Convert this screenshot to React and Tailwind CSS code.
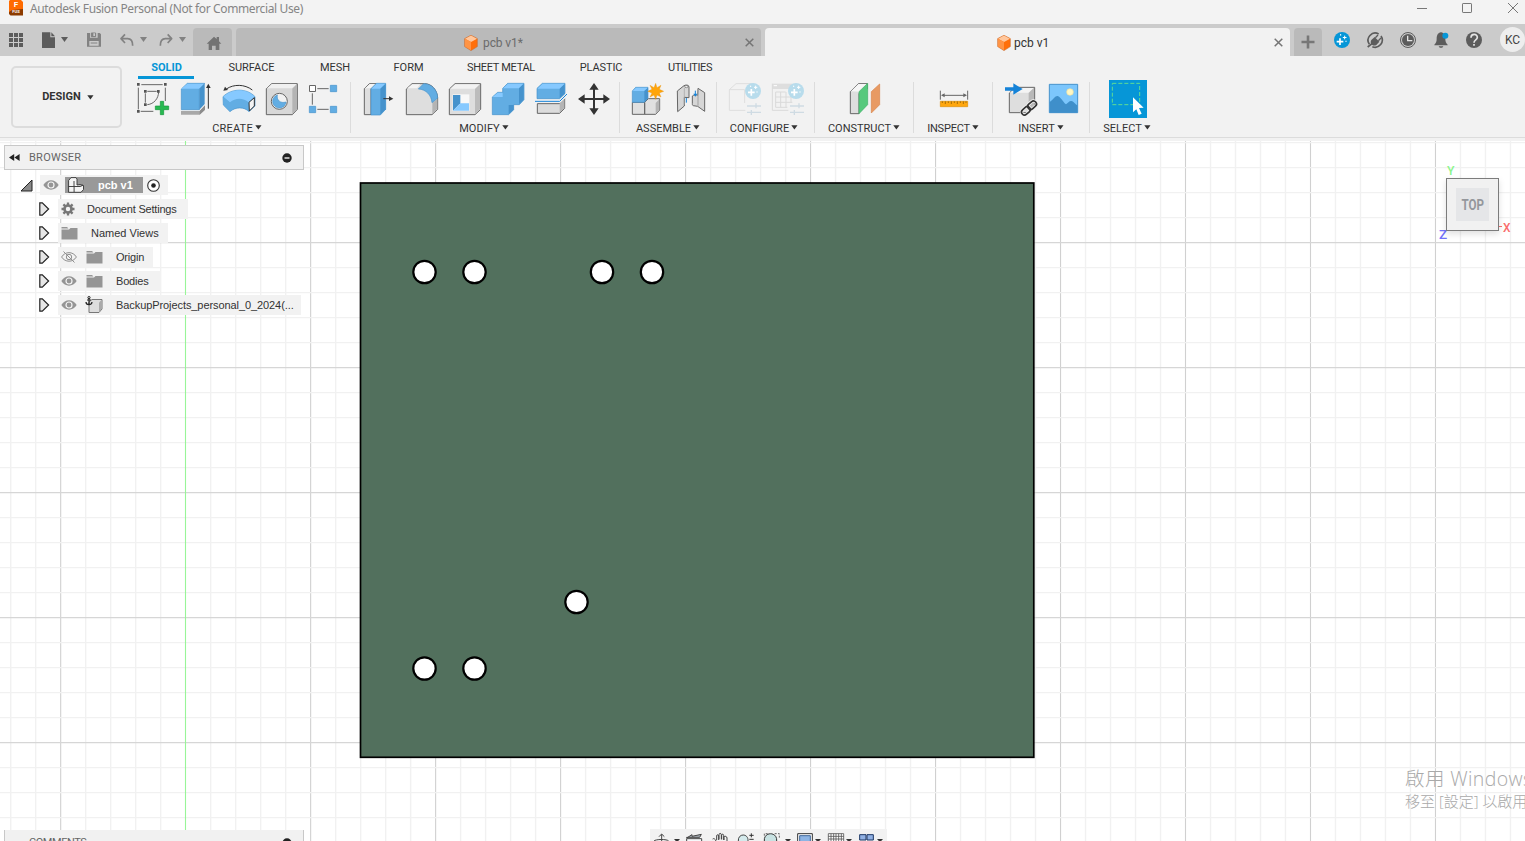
import React from "react";

/* Icons are drawn on a fine grid with three units to the pixel. */
function Ico({ x, y = 69, w = 129, h = 120, children }) {
  return (
    <svg width={w / 3} height={h / 3} viewBox={`${x} ${y} ${w} ${h}`} className="block shrink-0" fill="none" strokeLinejoin="round">
      {children}
    </svg>
  );
}

const G = "#666666";
const B = "#62ade3";
const BL = "#86c9ff";
const BD = "#4592cc";

function Caret({ className = "" }) {
  return (
    <svg width="7" height="5" viewBox="0 0 7 5" className={"shrink-0 " + className}>
      <path d="M0.300 0.3h6.200L3.400 4.600z" fill="currentColor" />
    </svg>
  );
}

function Cube() {
  return (
    <svg width="14" height="16" viewBox="0 0 14 16" className="relative top-px shrink-0">
      <path d="M7 .3 13.3 3.6v8L7 15.6.7 11.6v-8z" fill="#ff6f0a" stroke="#c96a2b" strokeWidth=".6" />
      <path d="M1 3.7 7 .5l6 3.2-6 3.4z" fill="#ffc79d" />
      <path d="M1 3.8 7 7.1v8.2l-6-3.8z" fill="#ff9445" />
    </svg>
  );
}

const createIcons = (
  <>
    <Ico x={33}>
      <path d="M55 95v65M64 86h64M136 95v40M62 166h38" stroke={G} strokeWidth="3" />
      <path d="M76 112v28M82 106h28M116 108c-1 20-14 36-34 38" stroke={G} strokeWidth="3" />
      <path d="M51 81h8v8h-8zM132 81h8v8h-8zM51 162h8v8h-8zM72 102h8v8h-8zM111 102h8v8h-8zM72 142h8v8h-8z" fill="#555" />
      <path d="M121 136h10v14h15v11h-15v15h-10v-15h-15v-11h15z" fill="#27b950" stroke="#14953a" strokeWidth="2" />
    </Ico>
    <Ico x={162}>
      <path d="M183 165h56l16-14v10l-16 15h-56z" fill="#a9a9a9" />
      <path d="M239 165l16-17v13l-16 15z" fill="#8c8c8c" />
      <path d="M184 99l18-17h52l-16 17v62h-54z" fill={B} stroke={BD} strokeWidth="2" />
      <path d="M184 98l18-15h52l-16 15z" fill={BL} />
      <path d="M238 98l16-16v62l-16 17z" fill={BD} />
      <path d="M265 158V92" stroke="#333" strokeWidth="3" />
      <path d="M265 83l7 13h-14z" fill="#333" />
    </Ico>
    <Ico x={291}>
      <path d="M309 122c26-26 72-26 96 0v28l-18 17c-14-15-41-15-57 0l-20-20z" fill={B} stroke={BD} strokeWidth="2" />
      <path d="M310 122c26-26 70-26 94 0l-18 17c-16-14-40-14-56 0z" fill={BL} />
      <path d="M310 124l20 16v26l-19-19z" fill={B} />
      <path d="M387 139l16-14v25l-15 15z" fill="#f4f4f4" stroke="#333" strokeWidth="3" />
      <path d="M319 99c22-15 55-15 78 3" stroke="#333" strokeWidth="3" />
      <path d="M310 104l5-12 9 10z" fill="#333" />
    </Ico>
    <Ico x={420}>
      <path d="M439 98l16-15h77v77l-15 16h-78z" fill="#d8d8d8" stroke={G} strokeWidth="3" />
      <path d="M441 97l15-13h74l-14 13z" fill="#f0f0f0" />
      <path d="M517 98l14-14v75l-14 15z" fill="#b4b4b4" />
      <circle cx="478" cy="136" r="24" fill="#f2f2f2" stroke={G} strokeWidth="3" />
      <path d="M472 117c-3 16 10 26 26 21a20 20 0 1 1-26-21z" fill={B} stroke={BD} strokeWidth="2" />
    </Ico>
    <Ico x={549}>
      <path d="M592 98h34M577 112v34M592 160h34" stroke={G} strokeWidth="3" />
      <path d="M568.500 88.500h18v18h-18z" fill="#fff" stroke={G} strokeWidth="3" />
      <path d="M631 88h19v19h-19zM568 151h19v19h-19zM631 151h19v19h-19z" fill={B} stroke={BD} strokeWidth="2" />
    </Ico>
  </>
);

const modifyIcons = (
  <>
    <Ico x={21}>
      <path d="M43 98l15-15h21L63 98v78H43z" fill="#dedede" stroke={G} strokeWidth="3" />
      <path d="M45 97l14-13h18L63 97z" fill="#f4f4f4" />
      <path d="M63 98l16-16h28v78l-16 17H63z" fill={B} stroke={BD} strokeWidth="2" />
      <path d="M64 98l15-15h27L91 98z" fill={BL} />
      <path d="M91 98l16-15v77l-16 16z" fill={BD} />
      <path d="M100 128h20" stroke="#333" strokeWidth="3" />
      <path d="M130 128l-13-7v14z" fill="#333" />
    </Ico>
    <Ico x={150}>
      <path d="M169 99l17-16h38c22 0 38 20 39 43v34l-17 16h-77z" fill="#dedede" stroke={G} strokeWidth="3" />
      <path d="M172 97l15-12h24l-10 12z" fill="#f4f4f4" />
      <path d="M247 140l15-12v30l-15 16z" fill="#b4b4b4" />
      <path d="M205 99l16-16c24 0 42 20 42 43l-17 14c-2-23-18-40-41-41z" fill={B} stroke={BD} strokeWidth="2" />
    </Ico>
    <Ico x={279}>
      <path d="M298 99l17-16h77v77l-17 16h-77z" fill="#dedede" stroke={G} strokeWidth="3" />
      <path d="M301 98l15-13h73l-14 13z" fill="#f2f2f2" />
      <path d="M375 99l15-14v74l-15 15z" fill="#bcbcbc" />
      <path d="M308 115h50v50h-50z" fill="#f8f8f8" />
      <path d="M309 117h22v25l-22 22z" fill={BD} />
      <path d="M331 142h26v22h-48z" fill={BL} />
    </Ico>
    <Ico x={408}>
      <path d="M427 123l16-14h15V97l15-15h49v49l-14 15h-17v15l-15 15h-49z" fill={B} stroke={BD} strokeWidth="2" />
      <path d="M459 97l15-14h47l-14 14zM428 123l15-13h15v13z" fill={BL} />
      <path d="M507 97l14-14v48l-14 14zM476 161v-14h15v14l-15 14z" fill={BD} />
    </Ico>
    <Ico x={537}>
      <path d="M562 143h67l15-15v29l-15 15h-67z" fill="#dcdcdc" stroke={G} strokeWidth="3" />
      <path d="M629 143l14-14v27l-14 14z" fill="#b4b4b4" />
      <path d="M561 97l16-15h68v31l-16 15h-68z" fill={B} stroke={BD} strokeWidth="2" />
      <path d="M562 98l16-15h66l-15 15z" fill={BL} />
      <path d="M629 98l15-14v29l-15 14z" fill={BD} />
      <path d="M554 136h76l22-22" stroke="#f2f2f2" strokeWidth="8" />
      <path d="M555 136h74l22-22" stroke="#1583d8" strokeWidth="3" />
    </Ico>
    <Ico x={666}>
      <path d="M732 95v68M698 129h68" stroke="#333" strokeWidth="6" />
      <path d="M732 81l14 20h-28zM732 177l14-20h-28zM684 129l20-14v28zM780 129l-20-14v28z" fill="#333" />
    </Ico>
  </>
);

const spark = (cx, cy) => (
  <>
    <circle cx={cx} cy={cy} r="24" fill="#b8dcec" />
    <path d={`M${cx - 5} ${cy - 6}v20M${cx - 15} ${cy + 4}h20`} stroke="#fff" strokeWidth="5" />
    <path d={`M${cx + 8} ${cy - 16}v10M${cx + 3} ${cy - 11}h10M${cx - 7} ${cy - 16}v4M${cx + 12} ${cy + 1}v4`} stroke="#fff" strokeWidth="3" />
  </>
);
const sliders = (x) => (
  <path d={`M${x} 150h42M${x} 169h42M${x + 27} 142v15M${x + 13} 162v15`} stroke="#cfdbe3" strokeWidth="4" />
);

const assembleIcons = (
  <>
    <Ico x={33}>
      <path d="M52 139h37v36H52zM89 139l11-11h34v34l-12 13H89z" fill="#e0e0e0" stroke={G} strokeWidth="3" />
      <path d="M122 141l11-11v31l-11 12z" fill="#b4b4b4" />
      <path d="M52 105l10-11h37v32l-11 13H52z" fill={B} stroke={BD} strokeWidth="2" />
      <path d="M53 105l10-10h36l-11 10z" fill={BL} />
      <path d="M88 105l11-10v32l-11 11z" fill={BD} />
      <path d="M122 82l4 13 12-7-5 12 13 6-13 5 5 12-12-6-4 13-5-13-12 6 6-12-13-5 13-6-6-12 12 7z" fill="#ffa50a" stroke="#e48a00" strokeWidth="1" />
    </Ico>
    <Ico x={162}>
      <path d="M187 105l20-16c5-3 15-3 15 4v32l-14-1v26l-20 17z" fill="#d6d6d6" stroke={G} strokeWidth="3" />
      <path d="M208 96v50" stroke="#a0a0a0" strokeWidth="2" />
      <ellipse cx="214" cy="92" rx="5" ry="3" fill="#fff" stroke={G} strokeWidth="2" />
      <path d="M249 97l20 13v56l-21-15-13-2c-3-1-3-3-3-6v-23c5-4 12-4 16-2z" fill="#d6d6d6" stroke={G} strokeWidth="3" />
      <path d="M249 99v50" stroke="#a0a0a0" strokeWidth="3" />
      <path d="M214 126v14M241 104v13" stroke="#1583d8" strokeWidth="3" />
      <path d="M235 113h12l-6 9z" fill="#1583d8" />
    </Ico>
  </>
);

const configureIcons = (
  <>
    <Ico x={324}>
      <path d="M343 101l20-18h48M343 101v62h48M343 101h46v40" stroke="#dedede" strokeWidth="3" />
      {spark(414, 105)}
      {sliders(396)}
    </Ico>
    <Ico x={453}>
      <path d="M472 83h60v16h-60z" fill="#dedede" />
      <path d="M472 83v80h48M482 108v46h35M482 123h60M482 139h50M497 108v46M513 108v46M482 108h30M528 120v20" stroke="#dadada" strokeWidth="3" />
      <path d="M476 89h10" stroke="#fff" strokeWidth="3" />
      {spark(543, 105)}
      {sliders(525)}
    </Ico>
  </>
);

const constructIcons = (
  <Ico x={687}>
    <path d="M706 107l24-24h27v16l-25 13v61h-26z" fill="#dedede" stroke={G} strokeWidth="3" />
    <path d="M708 106l22-22h26l-23 23z" fill="#f6f6f6" />
    <path d="M732 107l26-25v64l-26 27z" fill="#57c97d" stroke="#3fb067" strokeWidth="2" />
    <path d="M769 107l25-23v62l-25 25z" fill="#e89a63" stroke="#da8448" strokeWidth="2" />
  </Ico>
);

const inspectIcons = (
  <Ico x={96}>
    <path d="M121 104v27M203 104v27M128 118h68" stroke={G} strokeWidth="3" />
    <path d="M123 118l11-6v12zM201 118l-11-6v12z" fill={G} />
    <path d="M121 136h82v16h-82z" fill="#ffa70f" stroke="#dd8d00" strokeWidth="2" />
    <path d="M127 136v5M136 136v8M145 136v5M154 136v8M163 136v5M172 136v8M181 136v5M190 136v8M198 136v5" stroke="#7a5200" strokeWidth="2" />
  </Ico>
);

const insertIcons = (
  <>
    <Ico x={297}>
      <path d="M328 111l18-17h58v58l-18 18h-58z" fill="#dedede" stroke={G} strokeWidth="3" />
      <path d="M330 110l17-14h54l-15 14z" fill="#f4f4f4" />
      <path d="M386 111l16-16v56l-16 17z" fill="#b8b8b8" />
      <path d="M315 94h25V82l28 17-28 17v-12h-25z" fill="#1583d8" />
      <g transform="rotate(-42 387 156)" strokeWidth="10" stroke="#f2f2f2">
        <rect x="360" y="147" width="29" height="18" rx="9" />
        <rect x="385" y="147" width="29" height="18" rx="9" />
      </g>
      <g transform="rotate(-42 387 156)" strokeWidth="5" stroke="#333">
        <rect x="360" y="147" width="29" height="18" rx="9" />
        <rect x="385" y="147" width="29" height="18" rx="9" />
      </g>
    </Ico>
    <Ico x={426}>
      <path d="M448 85h85v85h-85z" fill="#7cc6fc" stroke={BD} strokeWidth="3" />
      <path d="M449 138c12-8 16-19 24-18 9 2 14 16 25 25 6-4 10-11 16-10 8 1 11 10 18 13v22h-83z" fill="#3f8fca" />
      <circle cx="510" cy="108" r="10" fill="#fff7c4" stroke="#f0e09a" strokeWidth="2" />
    </Ico>
  </>
);

const selectIcons = (
  <Ico x={618}>
    <path d="M627 72h114v114H627z" fill="#0696d7" />
    <path d="M637 82h82v64h-82z" stroke="#5fdc94" strokeWidth="3" strokeDasharray="12 6" />
    <path d="M699 124l32 31-14 1 8 17-9 4-7-17-10 9z" fill="#fff" />
  </Ico>
);

function Group({ label, children, className, iconPad, labelPad = "", last }) {
  return (
    <div className={"flex shrink-0 " + className}>
      <div className="flex min-w-0 flex-1 flex-col">
        <div className={"flex h-10 " + iconPad}>{children}</div>
        <div className={"flex h-[20px] items-center justify-center gap-[2px] whitespace-nowrap text-[11px] text-[#333] " + labelPad}>
          <span>{label}</span>
          <Caret className="mb-[3px]" />
        </div>
      </div>
      {!last && <div className="mt-[3px] h-[51px] w-px bg-[#dcdcdc]" />}
    </div>
  );
}

function Eye({ off }) {
  return (
    <svg width="16" height="12" viewBox="0 0 16 12" fill="none" className="shrink-0">
      {off ? (
        <>
          <path d="M.6 6C4 .2 12 .2 15.400 6 12 11.600 4 11.600.6 6z" stroke="#8f8f8f" />
          <circle cx="8" cy="6" r="2.700" stroke="#8f8f8f" />
          <path d="M2.500.5l11 11" stroke="#8f8f8f" />
        </>
      ) : (
        <>
          <path d="M.3 6C4-.4 12-.4 15.700 6 12 12.200 4 12.200.3 6z" fill="#959595" />
          <circle cx="8" cy="6" r="3" stroke="#f4f4f4" strokeWidth="1.200" />
        </>
      )}
    </svg>
  );
}

function Folder() {
  return (
    <svg width="17" height="14" viewBox="0 0 17 14" className="shrink-0">
      <path d="M.5 1h5.500l1.500 1.500H.5zM.5 3.500H8L9.500 2H16.500v11.500H.5z" fill="#959595" />
    </svg>
  );
}

function Gear() {
  return (
    <svg width="14" height="14" viewBox="-7 -7 14 14" className="shrink-0" fill="none">
      <path d="M0-6.500v13M-6.500 0h13M-4.600-4.600l9.200 9.200M-4.600 4.600l9.200-9.200" stroke="#777" strokeWidth="2.300" />
      <circle r="3.500" fill="#f2f2f2" stroke="#777" strokeWidth="2.600" />
    </svg>
  );
}

function Expander() {
  return (
    <svg width="11" height="14" viewBox="0 0 11 14" className="shrink-0">
      <path d="M.8.8h2.500L9.600 7l-6.300 6.200H.8z" fill="#e6e6e6" stroke="#222" strokeWidth="1.200" />
    </svg>
  );
}

function Row({ children, className }) {
  return (
    <div className="flex h-6 items-center pl-[35px]">
      <Expander />
      <div className={"ml-2 flex h-5 items-center whitespace-nowrap bg-[#f2f2f2] " + className}>{children}</div>
    </div>
  );
}

function MinusDot() {
  return (
    <svg width="10" height="10" viewBox="0 0 10 10" className="block shrink-0">
      <circle cx="5" cy="5" r="4.700" fill="#222" />
      <path d="M2.500 5h5" stroke="#fff" strokeWidth="1.300" />
    </svg>
  );
}

function Viewport() {
  const xs = Array.from({ length: 61 }, (_, i) => 10.7 + i * 24.996);
  const ys = Array.from({ length: 28 }, (_, i) => 142.6 + i * 25);
  const holes = [[424.500, 272], [474.500, 272], [602, 272], [652, 272], [576.500, 602], [424.500, 668.500], [474.500, 668.500]];
  return (
    <svg width="1525" height="703" viewBox="0 138 1525 703" className="block">
      <rect y="138" width="1525" height="703" fill="#fff" />
      <rect y="138" width="1525" height="3" fill="#f2f2f2" />
      {xs.map((x, i) =>
        i === 7 ? null : (
          <path key={"x" + i} d={`M${x} 141V841`} stroke={i % 5 === 2 ? "#d0d0d0" : "#f1f1f1"} strokeWidth={i % 5 === 2 ? 1.1 : 1.4} />
        )
      )}
      {ys.map((y, i) => (
        <path key={"y" + i} d={`M0 ${y}H1525`} stroke={i % 5 === 4 ? "#d6d6d6" : "#f1f1f1"} strokeWidth={i % 5 === 4 ? 1.2 : 1.4} />
      ))}
      <path d="M185.500 141V841" stroke="#98f598" strokeWidth="1.100" />
      <rect x="360.500" y="183" width="673.300" height="574.300" fill="#52705d" stroke="#000" strokeWidth="1.700" />
      {holes.map(([x, y]) => (
        <circle key={x + "-" + y} cx={x} cy={y} r="11.200" fill="#fff" stroke="#000" strokeWidth="2.200" />
      ))}
    </svg>
  );
}

const tabs = [
  ["SURFACE", "w-[101px]"],
  ["MESH", "w-[66px]"],
  ["FORM", "w-[81px]"],
  ["SHEET METAL", "w-[104px] tracking-[-0.3px]"],
  ["PLASTIC", "w-[96px] tracking-[-0.1px]"],
  ["UTILITIES", "w-[82px] tracking-[-0.4px]"],
];

export default function App() {
  return (
    <div className="relative flex h-[841px] w-[1525px] flex-col overflow-hidden bg-[#f2f2f2] font-['Roboto',sans-serif]">
      <header className="flex h-6 shrink-0 items-start bg-[#f3f3f3]">
        <svg width="16" height="17" viewBox="0 0 16 17" className="ml-2">
          <path d="M2 0h11l2 2v11H1V1z" fill="#ff6b00" />
          <path d="M1 12l3-2 11-1v6.500H2.500L1 14z" fill="#8c3b00" />
        </svg>
        <div className="-ml-[15px] w-[14px] text-center text-[8px] font-bold leading-[10px] text-white">
          F<div className="-mt-px text-[4px] leading-[6px]">FUS</div>
        </div>
        <div className="ml-[7px] whitespace-nowrap font-['Noto_Sans',sans-serif] text-[12px] leading-[18px] tracking-[-0.37px] text-[#858585]">
          Autodesk Fusion Personal (Not for Commercial Use)
        </div>
        <svg width="110" height="18" viewBox="0 0 110 18" className="ml-auto" fill="none" stroke="#777">
          <path d="M2 8.500h10M93 3l10 10M103 3L93 13" />
          <rect x="47.500" y="3.500" width="9" height="9" rx=".6" />
        </svg>
      </header>

      <div className="flex h-8 shrink-0 items-end bg-[#cbcbcb]">
        <Ico x={0} y={72} w={96} h={96}>
          <path d="M27 99h12v12H27zM42 99h12v12H42zM57 99h12v12H57zM27 114h12v12H27zM42 114h12v12H42zM57 114h12v12H57zM27 129h12v12H27zM42 129h12v12H42zM57 129h12v12H57z" fill="#5c5c5c" />
        </Ico>
        <Ico x={96} y={72} w={129} h={96}>
          <path d="M126 97h25v15h14v32h-39zM154 97l11 12h-11z" fill="#5c5c5c" />
          <path d="M183 111h21l-10.500 15z" fill="#5c5c5c" />
        </Ico>
        <Ico x={225} y={72} w={114} h={96}>
          <path d="M261 99h38l4 4v37h-42z" fill="#828282" />
          <path d="M270 99h23v14h-23zM268 123h28v14h-28z" fill="#cbcbcb" />
          <path d="M274 99h13v11h-13zM272 129h20" fill="#828282" stroke="#828282" strokeWidth="3" />
          <path d="M280 100h5v8h-5z" fill="#cbcbcb" />
        </Ico>
        <Ico x={339} y={72} w={117} h={96}>
          <path d="M375 103l-12 13 12 13M364 116h19c10 0 15 7 15 21" stroke="#828282" strokeWidth="5" />
          <path d="M420 111h21l-10.500 15z" fill="#828282" />
        </Ico>
        <Ico x={456} y={72} w={123} h={96}>
          <path d="M503 103l12 13-12 13M514 116h-18c-10 0-15 7-15 21" stroke="#828282" strokeWidth="5" />
          <path d="M537 111h21l-10.500 15z" fill="#828282" />
        </Ico>
        <div className="h-7 w-[39px] rounded-t bg-[#bababa]">
          <Ico x={579} y={84} w={117} h={84}>
            <path d="M620 131l22-21 8 7v-6h7v13l7 7h-6v19h-11v-13h-11v13h-10v-19z" fill="#737373" />
          </Ico>
        </div>
        <div className="ml-1 flex h-7 w-[525px] items-center rounded-t bg-[#bababa] pl-[228px] text-[#6b6b6b]">
          <Cube />
          <span className="ml-[5px] mt-[2px] whitespace-nowrap text-[12px] leading-[14px] tracking-[-0.1px]">pcb v1*</span>
          <svg width="9" height="9" viewBox="0 0 9 9" className="ml-auto mr-[7px]" stroke="#757575" strokeWidth="1.500"><path d="M.7.7l7.600 7.600M8.300.7L.7 8.300" /></svg>
        </div>
        <div className="ml-1 flex h-7 w-[525px] items-center rounded-t bg-[#f2f2f2] pl-[232px] text-[#333]">
          <Cube />
          <span className="ml-[3px] mt-[2px] whitespace-nowrap text-[12px] leading-[14px]">pcb v1</span>
          <svg width="9" height="9" viewBox="0 0 9 9" className="ml-auto mr-[7px]" stroke="#757575" strokeWidth="1.500"><path d="M.7.7l7.600 7.600M8.300.7L.7 8.300" /></svg>
        </div>
        <div className="ml-1 flex h-7 w-7 items-center justify-center rounded-t bg-[#bababa]">
          <svg width="14" height="14" viewBox="0 0 14 14" stroke="#777" strokeWidth="2.600"><path d="M7 .5v13M.5 7h13" /></svg>
        </div>
        <div className="ml-1 flex">
          <Ico x={198} y={72} w={99} h={96}>
            <circle cx="246" cy="120" r="24" fill="#0696d7" />
            <path d="M240 115v20M230 125h20" stroke="#fff" strokeWidth="5" />
            <path d="M254 107v11M248.500 112.500h11M242 102v5M258 122v4" stroke="#fff" strokeWidth="3" />
          </Ico>
          <Ico x={297} y={72} w={99} h={96}>
            <path d="M328 133a21.500 21.500 0 0 1 28-31M363 108a21.500 21.500 0 0 1-26 32" stroke="#5c5c5c" strokeWidth="5" />
            <path d="M323 141l14-11" stroke="#5c5c5c" strokeWidth="5" />
            <path d="M334 120l10-9 14 14-9 10c-11 6-21-5-15-15z" fill="#5c5c5c" />
            <path d="M346 113l8-8M355 122l8-8" stroke="#5c5c5c" strokeWidth="4" />
          </Ico>
          <Ico x={396} y={72} w={99} h={96}>
            <circle cx="444" cy="120" r="22.500" stroke="#5c5c5c" strokeWidth="3" />
            <circle cx="444" cy="120" r="18" fill="#5c5c5c" />
            <path d="M443 107v15h14" stroke="#e5e5e5" strokeWidth="4" />
          </Ico>
          <Ico x={495} y={72} w={99} h={96}>
            <path d="M543 97c-11 2-13 11-13 20 0 8-2 12-7 17v2h40v-2c-5-5-7-9-7-17 0-9-2-18-13-20zM536 139h14c-2 6-12 6-14 0z" fill="#5c5c5c" />
            <circle cx="556" cy="107" r="9" fill="#0696d7" />
          </Ico>
          <Ico x={594} y={72} w={99} h={96}>
            <circle cx="642" cy="120" r="24" fill="#5c5c5c" />
            <path d="M633 113c0-13 19-13 19-1 0 8-10 7-10 16M642 132v5" stroke="#e5e5e5" strokeWidth="5" />
          </Ico>
        </div>
        <div className="mb-1 ml-[9px] flex size-[25px] shrink-0 items-center justify-center rounded-full bg-[#eeeeee] pt-px text-[12px] text-[#444]">KC</div>
      </div>

      <section className="flex h-[82px] shrink-0 border-b border-[#dcdcdc] bg-[#f2f2f2]">
        <button className="ml-[11px] mt-[10px] flex h-[62px] w-[111px] shrink-0 items-center justify-center gap-[6px] rounded-[5px] border-2 border-[#dcdcdc] pl-[3px] pt-px text-[11px] font-bold text-[#333]">
          DESIGN <Caret className="mb-px" />
        </button>
        <div className="flex flex-col">
          <nav className="flex h-[23px] whitespace-nowrap text-center text-[11px] leading-[23px] text-[#333]">
            <div className="ml-4 h-[23px] w-14 border-b-[3px] border-[#0696d7] pl-px font-bold text-[#0696d7]">SOLID</div>
            <div className="ml-[7px] flex">
              {tabs.map(([t, w]) => (
                <div key={t} className={w}>{t}</div>
              ))}
            </div>
          </nav>
          <div className="flex">
            <Group label="CREATE" className="w-[229px] tracking-[0.2px]" iconPad="pl-[9px]" labelPad="pl-[2px]">{createIcons}</Group>
            <Group label="MODIFY" className="w-[269px] tracking-[0.1px]" iconPad="pl-[6px]" labelPad="pr-[2px]">{modifyIcons}</Group>
            <Group label="ASSEMBLE" className="w-[97px]" iconPad="pl-[6px]">{assembleIcons}</Group>
            <Group label="CONFIGURE" className="w-[98px]" iconPad="pl-[6px]" labelPad="pr-[3px]">{configureIcons}</Group>
            <Group label="CONSTRUCT" className="w-[99px]" iconPad="pl-[29px]">{constructIcons}</Group>
            <Group label="INSPECT" className="w-[79px] tracking-[-0.2px]" iconPad="pl-[18px]">{inspectIcons}</Group>
            <Group label="INSERT" className="w-[97px]" iconPad="pl-[6px]">{insertIcons}</Group>
            <Group label="SELECT" className="w-[74px]" iconPad="pl-[16px]" last>{selectIcons}</Group>
          </div>
        </div>
      </section>

      <main className="relative h-[703px] shrink-0 overflow-hidden">
        <Viewport />

        <aside className="absolute left-1 top-[7px] w-[300px] font-['Liberation_Sans',sans-serif] text-[11px] text-[#333]">
          <div className="flex h-[25px] items-center border border-[#c8c8c8] bg-[#f1f1f1] pl-1 pr-[11px]">
            <svg width="11" height="7" viewBox="0 0 11 7"><path d="M5.200 0v7L0 3.500zM10.600 0v7L5.400 3.500z" fill="#222" /></svg>
            <span className="ml-[9px] mt-px font-['Roboto',sans-serif] tracking-[0.25px] text-[#666]">BROWSER</span>
            <span className="ml-auto"><MinusDot /></span>
          </div>
          <div className="mt-[3px] flex h-6 items-center pl-4">
            <svg width="13" height="13" viewBox="0 0 13 13"><path d="M12 1v11H1z" fill="#8a8a8a" stroke="#222" /></svg>
            <div className="ml-[7px] flex h-5 w-[128px] items-center bg-[#f2f2f2] pl-[3px]">
              <Eye />
              <div className="ml-[6px] flex h-4 w-[78px] items-center bg-[#999] pl-[3px]">
                <svg width="16" height="16" viewBox="0 0 16 16" fill="#f4f4f4" stroke="#333" strokeWidth=".9" strokeLinejoin="round"><path d="M.6 3.500 3 .6h5l1 1.500V8l3-.5 3.500 1v4L13 15.300H.6zM.6 9.500h5.500v5.500M6 9.500h6.500L15 8M6 9.500V4" /></svg>
                <b className="ml-[14px] whitespace-nowrap text-white">pcb v1</b>
              </div>
              <svg width="13" height="13" viewBox="0 0 13 13" className="ml-[4px]"><circle cx="6.500" cy="6.500" r="5.800" fill="#fff" stroke="#333" strokeWidth="1.100" /><circle cx="6.500" cy="6.500" r="2.300" fill="#222" /></svg>
            </div>
          </div>
          <Row className="w-[130px] pl-[3px]"><Gear /><span className="ml-3 tracking-[-0.2px]">Document Settings</span></Row>
          <Row className="w-[110px] pl-[3px]"><Folder /><span className="ml-[13px]">Named Views</span></Row>
          <Row className="w-[95px] pl-[3px]"><Eye off /><span className="ml-[9px]"><Folder /></span><span className="ml-[13px] tracking-[-0.2px]">Origin</span></Row>
          <Row className="w-[103px] pl-[3px]"><Eye /><span className="ml-[9px]"><Folder /></span><span className="ml-[13px] tracking-[-0.2px]">Bodies</span></Row>
          <Row className="w-[243px] pl-[3px]">
            <Eye />
            <svg width="18" height="18" viewBox="0 0 18 18" className="ml-[8px] shrink-0" fill="none" strokeLinejoin="round">
              <path d="M4 6l3-2.500h10V13l-3 3.500H4z" fill="#ddd" stroke="#777" />
              <path d="M14 6.500l2.500-2.500v9L14 16z" fill="#aaa" />
              <path d="M4 2v6M2 4h4M1 6c0 3.500 6 3.500 6 0" stroke="#222" strokeWidth="1.200" />
              <circle cx="4" cy="1.600" r="1.100" stroke="#222" />
            </svg>
            <span className="ml-[13px] tracking-[-0.08px]">BackupProjects_personal_0_2024(...</span>
          </Row>
        </aside>

        <div className="absolute left-[1436px] top-[24px]">
          <svg width="78" height="84" viewBox="1436 162 78 84" className="block" fontFamily="Roboto, sans-serif">
            <text x="1447" y="175" fontSize="13.500" fontWeight="500" fill="#8df58d" textLength="7.500" lengthAdjust="spacingAndGlyphs">Y</text>
            <text x="1439" y="238.500" fontSize="13.500" fontWeight="500" fill="#7272fa">Z</text>
            <text x="1503" y="231.500" fontSize="13.500" fontWeight="500" fill="#f96d6d" textLength="7.500" lengthAdjust="spacingAndGlyphs">X</text>
            <path d="M1499 226.500h3" stroke="#f96d6d" />
            <rect x="1446.500" y="178.500" width="52" height="52" fill="#f1f1f1" stroke="#7c7c7c" className="drop-shadow-md" />
            <rect x="1456" y="188" width="33" height="33" fill="#e5e6e8" />
            <text x="1461.500" y="210" fontSize="15.500" fontWeight="700" fill="#94979c" textLength="22.500" lengthAdjust="spacingAndGlyphs">TOP</text>
          </svg>
        </div>

        <div className="absolute left-[1405px] top-[628px] whitespace-nowrap font-['Open_Sans','Noto_Sans_CJK_TC',sans-serif] font-light text-[#a9a9a9]">
          <div className="text-[19.5px] leading-[26px] tracking-[0.4px]">啟用 Windows</div>
          <div className="text-[15px] leading-[19px]">移至 [設定] 以啟用 Windows。</div>
        </div>

        <div className="absolute left-1 top-[692px] flex h-[25px] w-[300px] items-center border-x border-[#c8c8c8] bg-[#f1f1f1] pl-[24px] pr-[11px] pt-px text-[11px] text-[#666]">
          <span className="tracking-[-0.45px]">COMMENTS</span> <span className="ml-auto"><MinusDot /></span>
        </div>

        <div className="absolute left-[650px] top-[691px] h-[25px] w-[237px] bg-[#f2f2f2]">
          <svg width="237" height="12" viewBox="30 267 711 36" fill="none" className="block">
            <path d="M65 303v-20M57 290l8-8 8 8M42 303c4-6 40-6 44 0" stroke="#444" strokeWidth="3" />
            <path d="M140 294l16-10v5l28-6-5 9h-39z" fill="#aab2ba" stroke="#444" strokeWidth="3" />
            <path d="M140 296h45v14h-45z" fill="#f6f8fa" stroke="#444" strokeWidth="3" />
            <path d="M218 297c3-3 8 0 10 6M230 300v-12c0-5 5-5 6 0v12M237 298v-14c0-5 7-5 7 0v14M245 298v-12c0-5 6-4 6 0v14M252 300v-8c0-5 9-4 9 2v9" stroke="#444" strokeWidth="3" />
            <path d="M295 303c-2-24 31-24 29 0" fill="#d4eaec" stroke="#444" strokeWidth="3" />
            <path d="M334 280v12M328 286h13M328 298h13" stroke="#333" strokeWidth="3" />
            <path d="M373 303c-3-29 40-29 37 0" fill="#c8e2e2" stroke="#333" strokeWidth="3" />
            <path d="M373 287v-6h12M404 281h14v12" stroke="#666" strokeWidth="3" strokeDasharray="6 4" />
            <path d="M473 281h44v32h-44z" fill="#fff" stroke="#333" strokeWidth="3" />
            <path d="M479 287h32v24h-32z" fill="#8db4e4" stroke="#446a99" strokeWidth="3" />
            <path d="M565 281h46v30h-46z" fill="#fff" />
            <path d="M565 281h46v30M565 281v30M565 289h46M565 297h46M573 281v24M581 281v24M588 281v24M596 281v24M604 281v24" stroke="#555" strokeWidth="2.500" />
            <path d="M659 284h19v16h-19zM681 284h19v16h-19z" fill="#91b1e4" stroke="#1d3765" strokeWidth="3" />
            <path d="M102 297h18l-9 10zM435 297h18l-9 10zM525 297h18l-9 10zM618 297h18l-9 10zM711 297h18l-9 10z" fill="#333" />
          </svg>
        </div>
      </main>
    </div>
  );
}
